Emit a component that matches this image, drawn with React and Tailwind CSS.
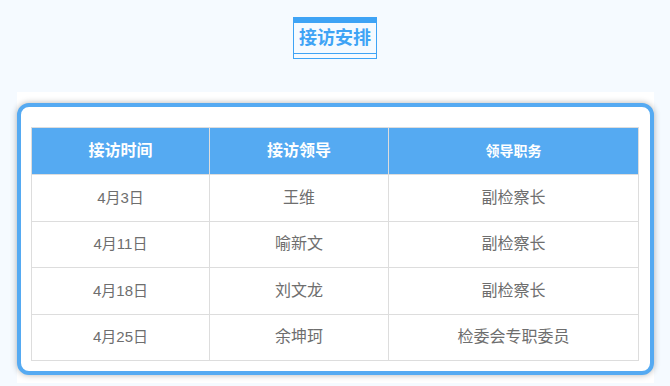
import React from 'react';

const rows = [
  { date: '4月3日', name: '王维', title: '副检察长' },
  { date: '4月11日', name: '喻新文', title: '副检察长' },
  { date: '4月18日', name: '刘文龙', title: '副检察长' },
  { date: '4月25日', name: '余坤珂', title: '检委会专职委员' },
];

const font = { fontFamily: '"Liberation Sans", "Noto Sans CJK SC", sans-serif' };

export default function App() {
  return (
    <div className="w-[670px] h-[386px] bg-[#f5faff] overflow-hidden" style={font}>
      <div className="flex justify-center pt-[17px]">
        <div className="border border-[#3ea3f5] border-t-[6px] pb-[4px]">
          <div className="h-[31px] border-b border-[#3ea3f5] px-[5px] flex items-center text-[18px] font-bold text-[#3ea3f5] leading-none">
            接访安排
          </div>
        </div>
      </div>

      <div className="mt-[33px] ml-[17px] mr-[16px] bg-white pt-[11px] pb-[8px]">
        <div className="border-4 border-[#55aaf2] rounded-[12px] bg-white shadow-[0_0_6px_rgba(0,0,0,0.3)] pt-[20px] pl-[10px] pr-[11px] pb-[10px]">
          <table className="w-full border-collapse table-fixed">
            <colgroup>
              <col className="w-[178px]" />
              <col className="w-[179px]" />
              <col />
            </colgroup>
            <thead>
              <tr className="h-[47px] bg-[#55aaf2] text-white">
                <th className="border border-[#dddddd] text-[16px] font-bold">接访时间</th>
                <th className="border border-[#dddddd] text-[16px] font-bold">接访领导</th>
                <th className="border border-[#dddddd] text-[14px] font-bold">领导职务</th>
              </tr>
            </thead>
            <tbody>
              {rows.map((r, i) => (
                <tr key={i} className="h-[46.5px] text-[#6e6e6e]">
                  <td className="border border-[#dddddd] text-center text-[15px]">{r.date}</td>
                  <td className="border border-[#dddddd] text-center text-[16px]">{r.name}</td>
                  <td className="border border-[#dddddd] text-center text-[16px]">{r.title}</td>
                </tr>
              ))}
            </tbody>
          </table>
        </div>
      </div>
    </div>
  );
}
